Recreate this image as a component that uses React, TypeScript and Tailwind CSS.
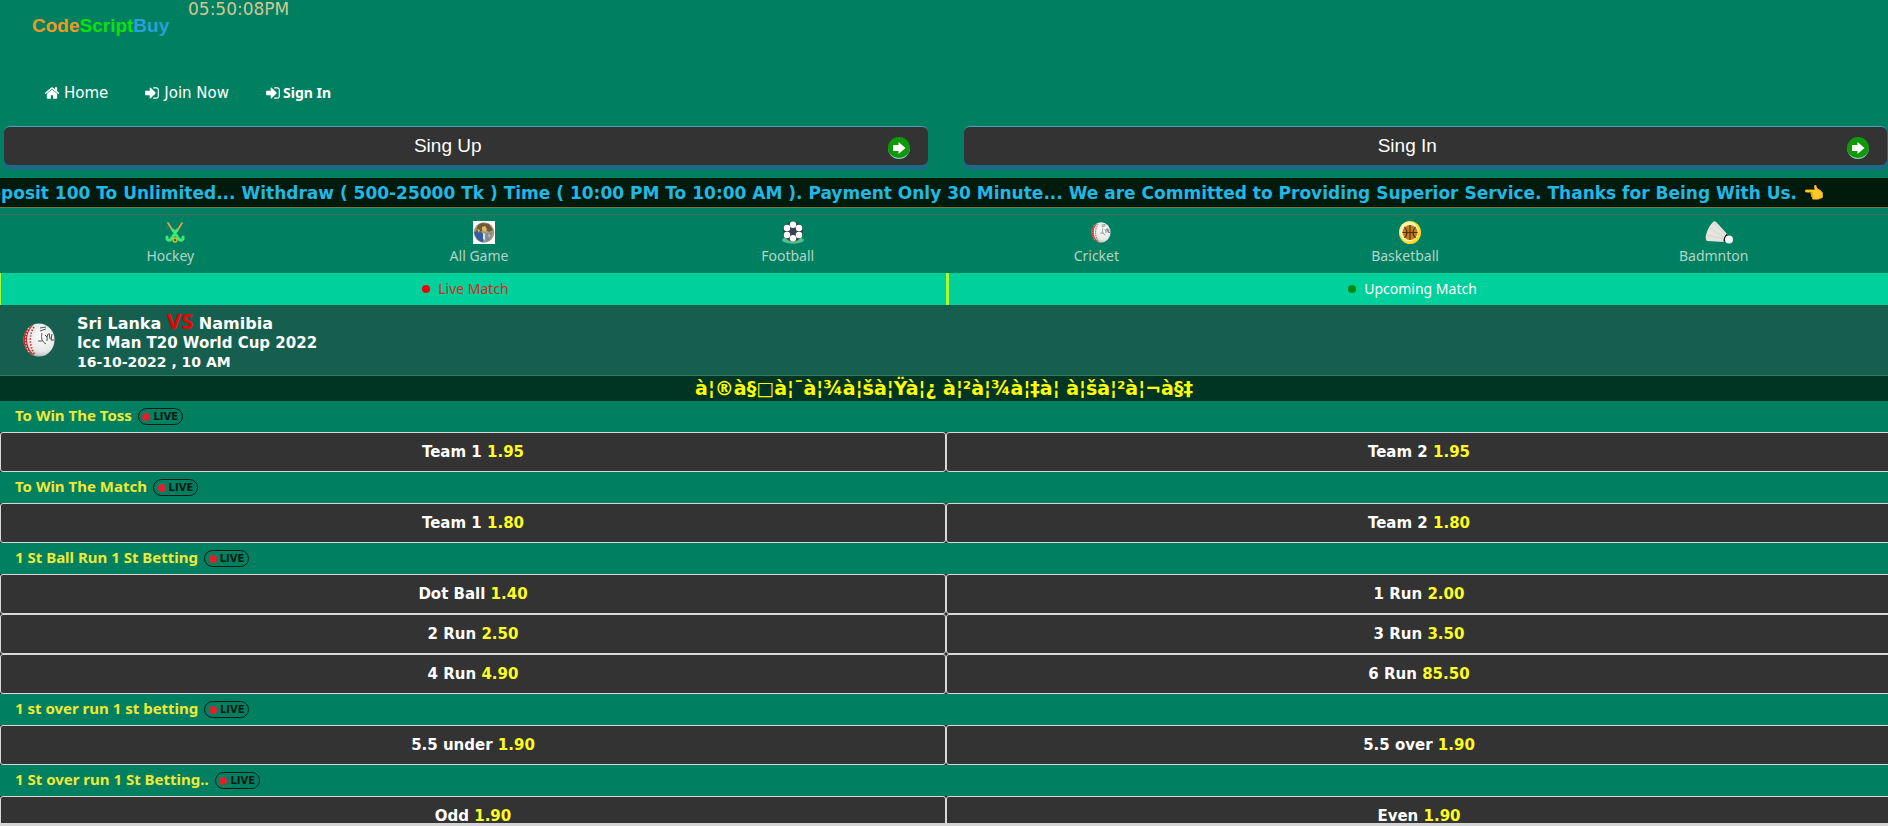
import React from "react";

const noto = "font-['Noto_Sans',sans-serif]";

function HomeIcon() {
  return (
    <svg className="size-4" viewBox="0 0 1792 1792" fill="currentColor" aria-hidden="true">
      <path d="M1472 992v480q0 26-19 45t-45 19h-384v-384h-256v384h-384q-26 0-45-19t-19-45v-480q0-1 .5-3t.5-3l575-474 575 474q1 2 1 6zm223-69l-62 74q-8 9-21 11h-3q-13 0-21-7l-692-577-692 577q-12 8-24 7-13-2-21-11l-62-74q-8-10-7-23.500t11-21.500l719-599q32-26 76-26t76 26l244 204v-195q0-14 9-23t23-9h192q14 0 23 9t9 23v408l219 182q10 8 11 21.500t-7 23.500z" />
    </svg>
  );
}

function SignInIcon() {
  return (
    <svg className="size-4" viewBox="0 0 1792 1792" fill="currentColor" aria-hidden="true">
      <path d="M1312 896q0 26-19 45l-544 544q-19 19-45 19t-45-19-19-45v-288h-448q-26 0-45-19t-19-45v-384q0-26 19-45t45-19h448v-288q0-26 19-45t45-19 45 19l544 544q19 19 19 45zm352-352v704q0 119-84.500 203.500t-203.500 84.500h-320q-13 0-22.500-9.500t-9.500-22.500q0-4-1-20t-.5-26.500 3-23.500 10-19.500 20.500-6.500h320q66 0 113-47t47-113v-704q0-66-47-113t-113-47h-312l-11.500-1-11.500-3-8-5.500-7-9-2-13.500q0-4-1-20t-.5-26.500 3-23.500 10-19.500 20.500-6.500h320q119 0 203.500 84.500t84.500 203.500z" />
    </svg>
  );
}

function Ball({ className }: { className: string }) {
  return (
    <svg className={className} viewBox="0 0 32 34" aria-hidden="true">
      <defs>
        <radialGradient id="leather" cx="0.6" cy="0.4" r="0.65">
          <stop offset="0" stopColor="#ffffff" />
          <stop offset="0.7" stopColor="#e6e8e8" />
          <stop offset="1" stopColor="#a9b0ae" />
        </radialGradient>
      </defs>
      <ellipse cx="16" cy="17" rx="15.500" ry="16.500" fill="url(#leather)" />
      <path d="M11 1.500Q.5 6 .5 17T12 33Q4 26 4 17T11 1.500z" fill="#c3262a" />
      <path d="M6 5Q-1 17 6 29" stroke="#f6dad8" strokeWidth="1.200" strokeDasharray="1.400 1.600" fill="none" />
      <path d="M11 4Q3 17 12 32" stroke="#c3262a" strokeWidth="1.600" strokeDasharray="1.400 1.600" fill="none" />
      <path d="M17 5l6-1M17 8l6-2M19 10q-2 8 4 11M15 18h4" stroke="#555" strokeWidth="1" fill="none" />
      <path d="M22 12l2 2 1-3M24 14v4M26 10l1 6M29 11l-1 6h3" stroke="#444" strokeWidth="1" fill="none" />
    </svg>
  );
}

const sports: { name: string; icon: React.ReactNode }[] = [
  {
    name: "Hockey",
    icon: (
      <svg className="h-[23px] w-[22px]" viewBox="0 0 22 23" fill="none" strokeLinecap="round" aria-hidden="true">
        <path d="M4 2l5 8M18 2l-5 8" stroke="#e0a050" strokeWidth="1.800" />
        <path d="M13 9l-5 8q-3 4-5 1v-2M9 9l5 8q3 4 5 1v-2" stroke="#3fe870" strokeWidth="3" />
        <circle cx="11" cy="19" r="2" fill="#3c6b1c" stroke="#d8c02c" strokeWidth="1.300" />
      </svg>
    ),
  },
  {
    name: "All Game",
    icon: (
      <svg className="h-[23px] w-[22px]" viewBox="0 0 22 23" aria-hidden="true">
        <path fill="#fff" d="M0 0h22v23H0z" />
        <circle cx="11" cy="11.500" r="10.300" fill="#a39a80" />
        <path d="M1 11q2 9 9 10.500l1-8-5-4z" fill="#355f9c" />
        <path d="M5 4l4-2 7 1 4 6-4 2-4-3-5 3-4-1z" fill="#6f5a38" />
        <path d="M12 13l7-2q1 6-6 10z" fill="#7d8ea0" />
        <path d="M9 6l3-1 2 3-2 3-3-2zM4 8l3 1-1 3zM15 13l3 1-2 3z" fill="#e2b964" />
        <path d="M10 12l2 1v6l-2-1z" fill="#dfe3e6" />
      </svg>
    ),
  },
  {
    name: "Football",
    icon: (
      <svg className="h-[23px] w-[22px]" viewBox="0 0 22 23" aria-hidden="true">
        <ellipse cx="11" cy="19" rx="11" ry="3.700" fill="#5bbd8c" />
        <circle cx="11" cy="10.500" r="10" fill="#37444f" />
        <g fill="#fff">
          <circle cx="11" cy="3.700" r="3.200" />
          <circle cx="11" cy="17.300" r="3.200" />
          <circle cx="5" cy="7" r="3.200" />
          <circle cx="17" cy="7" r="3.200" />
          <circle cx="5" cy="14" r="3.200" />
          <circle cx="17" cy="14" r="3.200" />
        </g>
      </svg>
    ),
  },
  { name: "Cricket", icon: <Ball className="h-[23px] w-[22px] py-px" /> },
  {
    name: "Basketball",
    icon: (
      <svg className="h-[23px] w-[22px]" viewBox="0 0 22 23" aria-hidden="true">
        <ellipse cx="11" cy="11.500" rx="11" ry="11.500" fill="#ffd92e" />
        <ellipse cx="10" cy="10.500" rx="9.500" ry="10" fill="#fff3ae" />
        <circle cx="11" cy="11.500" r="7.500" fill="#c47c1c" />
        <path d="M11 4v15M3.500 11.500h15M5.500 6q5 5.500 0 11M16.500 6q-5 5.500 0 11" stroke="#4f2f0a" strokeWidth="1.100" fill="none" />
      </svg>
    ),
  },
  {
    name: "Badmnton",
    icon: (
      <svg className="h-[23px] w-7" viewBox="0 0 28 23" aria-hidden="true">
        <path d="M8 1q2-2 5 2l10 11-4 7-17-1q-2-2-1-6 2-8 7-13z" fill="#e4e5df" />
        <path d="M9 2l12 13M5 7l15 10M2 14l17 4" stroke="#cfd1c8" strokeWidth="0.800" />
        <path d="M22.500 13.500q-3 3-3 7" stroke="#1d1d1d" strokeWidth="2.200" fill="none" />
        <circle cx="24" cy="18.500" r="4" fill="#f4f6f4" />
      </svg>
    ),
  },
];

const markets: { title: string; odds: [string, string][] }[] = [
  { title: "To Win The Toss", odds: [["Team 1", "1.95"], ["Team 2", "1.95"]] },
  { title: "To Win The Match", odds: [["Team 1", "1.80"], ["Team 2", "1.80"]] },
  {
    title: "1 St Ball Run 1 St Betting",
    odds: [
      ["Dot Ball", "1.40"],
      ["1 Run", "2.00"],
      ["2 Run", "2.50"],
      ["3 Run", "3.50"],
      ["4 Run", "4.90"],
      ["6 Run", "85.50"],
    ],
  },
  { title: "1 st over run 1 st betting", odds: [["5.5 under", "1.90"], ["5.5 over", "1.90"]] },
  { title: "1 St over run 1 St Betting..", odds: [["Odd", "1.90"], ["Even", "1.90"]] },
];

function LiveBadge() {
  return (
    <span className="mt-[2px] flex h-[17px] w-[45px] items-center justify-center gap-[3px] rounded-full border border-[#031a14] font-['DejaVu_Sans',sans-serif] text-[10px] leading-none font-bold text-[#031a14]">
      <span className="size-2 rounded-full bg-[#e0202c]" />
      LIVE
    </span>
  );
}

function BigButton({ label }: { label: string }) {
  return (
    <button
      type="button"
      className="flex h-[39px] flex-1 items-center rounded-md border-t border-[#3fa3b5] bg-[#333] pr-[18px] pl-1 font-['Liberation_Sans',Arial,sans-serif] text-[19px] text-white shadow-[0_5px_0_#1b6a86]"
    >
      <span className="flex-1 text-center">{label}</span>
      <span className="mt-1 flex size-[22px] items-center justify-center rounded-full border-b border-[#8fd0c8] bg-[#0e9a08]">
        <svg className="h-3 w-[14px]" viewBox="0 0 14 12" fill="#fff" aria-hidden="true">
          <path d="M1 3h5.500V0L13.500 6l-7 6V9H1z" />
        </svg>
      </span>
    </button>
  );
}

export default function App() {
  return (
    <div className="h-screen overflow-hidden border-b-[3px] border-[#d4d4d4] bg-[#008060] font-['DejaVu_Sans',Verdana,sans-serif] text-white">
      <header className="flex h-[74px] items-start gap-6 pl-8">
        <a
          href="#"
          className="w-[132px] pt-2 font-['Liberation_Sans',Arial,sans-serif] text-[19px] leading-9 font-bold whitespace-nowrap"
        >
          <span className="text-[#ee9a28]">Code</span>
          <span className="text-[#0be30b]">Script</span>
          <span className="text-[#2a9fd8]">Buy</span>
        </a>
        <time className="text-[17px] leading-[18px] text-[#d2c896]">05:50:08PM</time>
      </header>
      <nav className="flex h-[52px] items-start gap-9 pt-2 pl-11 text-[15px] leading-[22px]">
        <a href="#" className="flex items-center gap-1">
          <HomeIcon />
          Home
        </a>
        <a href="#" className="flex items-center gap-1">
          <SignInIcon />
          Join Now
        </a>
        <a href="#" className={`flex items-center gap-[2px] text-sm leading-[22px] font-bold ${noto}`}>
          <SignInIcon />
          Sign In
        </a>
      </nav>
      <div className="flex h-[52px] items-start gap-9 pr-px pl-1">
        <BigButton label="Sing Up" />
        <BigButton label="Sing In" />
      </div>
      <p className="flex h-[30px] items-center justify-end overflow-hidden border-b border-[#7a7a3c] bg-[#001a0c] pt-[2px] pr-16 text-[17px] font-bold whitespace-nowrap text-[#21b8e6]">
        Deposit 100 To Unlimited... Withdraw ( 500-25000 Tk ) Time ( 10:00 PM To 10:00 AM ). Payment Only 30 Minute... We are Committed to Providing Superior Service. Thanks for Being With Us. 👈
      </p>
      <div className={`mt-[6px] flex h-[59px] border-t border-[#3f6f60] pt-[6px] pr-5 pl-4 text-sm leading-6 text-[#b3d4c9] ${noto}`}>
        {sports.map((s) => (
          <a key={s.name} href="#" className="flex flex-1 flex-col items-center">
            <span className="pl-[10px]">{s.icon}</span>
            <span>{s.name}</span>
          </a>
        ))}
      </div>
      <div className={`-mr-1 grid h-8 grid-cols-2 bg-[#00d09c] text-sm ${noto}`}>
        <button type="button" className="flex items-center justify-center gap-2 border-l border-[#adff2f] pr-4 text-[#c8321a]">
          <span className="size-2 rounded-full bg-[#f00008]" />
          Live Match
        </button>
        <button type="button" className="flex items-center justify-center gap-2 border-l-[3px] border-[#adff2f] pr-4 text-white">
          <span className="size-2 rounded-full bg-[#008a10]" />
          Upcoming Match
        </button>
      </div>
      <section className="flex h-[71px] items-center gap-[22px] border-b border-[#2f7a60] bg-[#165e4e] pl-[23px] font-bold">
        <Ball className="h-[34px] w-8" />
        <div className="pt-[2px]">
          <h1 className="text-base leading-5">
            Sri Lanka <span className={`text-[22px] leading-5 text-[#f00000] ${noto}`}>VS</span> Namibia
          </h1>
          <p className="text-[15px] leading-[18px]">Icc Man T20 World Cup 2022</p>
          <p className="text-sm leading-5">16-10-2022 , 10 AM</p>
        </div>
      </section>
      <p className="h-[25px] overflow-hidden bg-[#003524] text-center text-[19px] leading-6 font-bold text-[#ffff00]">
        à¦®à§□à¦¯à¦¾à¦šà¦Ÿà¦¿ à¦²à¦¾à¦‡à¦ à¦šà¦²à¦¬à§‡
      </p>
      {markets.map((m) => (
        <section key={m.title} className="-mr-1">
          <h2 className={`flex h-[31px] items-center gap-[6px] pb-[2px] pl-[15px] text-[15px] font-bold text-[#f0e838] ${noto}`}>
            {m.title}
            <LiveBadge />
          </h2>
          <div className="grid grid-cols-2 bg-[#333]">
            {m.odds.map(([label, odd]) => (
              <button
                key={label}
                type="button"
                className="h-10 rounded-[3px] border border-[#d8d8d8] bg-[#333] text-[15px] font-bold text-white"
              >
                {label} <span className="text-[#ffff20]">{odd}</span>
              </button>
            ))}
          </div>
        </section>
      ))}
    </div>
  );
}
